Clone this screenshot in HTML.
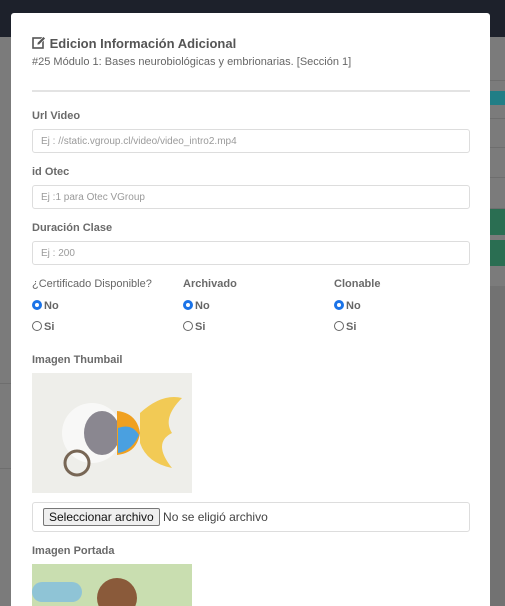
<!DOCTYPE html>
<html><head><meta charset="utf-8"><style>
*{box-sizing:border-box;margin:0;padding:0}
html,body{width:505px;height:606px;overflow:hidden}
body{background:#7b7b7b;font-family:"Liberation Sans",sans-serif;position:relative}
.top{position:absolute;left:0;top:0;width:505px;height:37px;background:#1d212b}
.abs{position:absolute}
.modal{position:absolute;left:11px;top:13px;width:479px;height:593px;background:#fff;border-radius:3px 3px 0 0;overflow:hidden}
.lbl{position:absolute;left:21px;font-size:11px;font-weight:bold;color:#6a6a6a;}
.inp{position:absolute;left:21px;width:438px;height:24px;border:1px solid #ddd;border-radius:3px;font-size:10px;color:#9a9a9a;padding:6px 8px}
.r{position:absolute;font-size:11px;font-weight:bold;color:#666}
.rd{display:inline-block;width:10px;height:10px;border:1px solid #666;border-radius:50%;vertical-align:-1px;margin-right:2px}
.rd.on{border:3px solid #1a73e8;background:#fff}
</style></head><body>
<div class="top"></div>
<div class="abs" style="left:490px;top:80px;width:15px;height:1px;background:#6e6e6e"></div>
<div class="abs" style="left:490px;top:91px;width:15px;height:14px;background:#217e86"></div>
<div class="abs" style="left:490px;top:118px;width:15px;height:1px;background:#6e6e6e"></div>
<div class="abs" style="left:490px;top:147px;width:15px;height:1px;background:#6e6e6e"></div>
<div class="abs" style="left:490px;top:177px;width:15px;height:1px;background:#6e6e6e"></div>
<div class="abs" style="left:490px;top:208px;width:15px;height:1px;background:#6e6e6e"></div>
<div class="abs" style="left:490px;top:209px;width:15px;height:26px;background:#2a6e52"></div>
<div class="abs" style="left:490px;top:240px;width:15px;height:26px;background:#2a6e52"></div>
<div class="abs" style="left:490px;top:286px;width:15px;height:320px;background:#727272"></div>
<div class="abs" style="left:0;top:383px;width:11px;height:1px;background:#6e6e6e"></div>
<div class="abs" style="left:0;top:468px;width:11px;height:1px;background:#6e6e6e"></div>
<div class="modal">
 <div class="abs" style="left:21px;top:23px;font-size:13px;font-weight:bold;color:#555">
  <svg width="14" height="13" viewBox="0 0 14 13" style="vertical-align:-1px"><rect x="1" y="2" width="10" height="10" fill="none" stroke="#555" stroke-width="1.6"/><path d="M5 9 L5.5 6.5 L11.5 0.5 L13.5 2.5 L7.5 8.5Z" fill="#555" stroke="#fff" stroke-width=".6"/></svg>
  Edicion Información Adicional</div>
 <div class="abs" style="left:21px;top:43px;font-size:11px;color:#666">#25 Módulo 1: Bases neurobiológicas y embrionarias. [Sección 1]</div>
 <div class="abs" style="left:21px;top:77px;width:438px;height:2px;background:#e3e3e3"></div>
 <div class="lbl" style="top:97px">Url Video</div>
 <div class="inp" style="top:116px">Ej : //static.vgroup.cl/video/video_intro2.mp4</div>
 <div class="lbl" style="top:153px">id Otec</div>
 <div class="inp" style="top:172px">Ej :1 para Otec VGroup</div>
 <div class="lbl" style="top:209px">Duración Clase</div>
 <div class="inp" style="top:228px">Ej : 200</div>
 <div class="lbl" style="top:265px;font-weight:normal;color:#666">¿Certificado Disponible?</div>
 <div class="lbl" style="top:265px;left:172px">Archivado</div>
 <div class="lbl" style="top:265px;left:323px">Clonable</div>
 <div class="r" style="left:21px;top:287px"><span class="rd on"></span>No</div>
 <div class="r" style="left:172px;top:287px"><span class="rd on"></span>No</div>
 <div class="r" style="left:323px;top:287px"><span class="rd on"></span>No</div>
 <div class="r" style="left:21px;top:308px"><span class="rd"></span>Si</div>
 <div class="r" style="left:172px;top:308px"><span class="rd"></span>Si</div>
 <div class="r" style="left:323px;top:308px"><span class="rd"></span>Si</div>
 <div class="lbl" style="top:341px">Imagen Thumbail</div>
 <div class="abs" style="left:21px;top:360px;width:160px;height:120px;background:#eeeeea">
  <svg width="160" height="120"><ellipse cx="60" cy="60" rx="30" ry="30" fill="#fff" opacity=".6"/>
  <ellipse cx="70" cy="60" rx="18" ry="22" fill="#8a8790"/>
  <path d="M85 38 Q105 40 108 60 Q105 80 85 82Z" fill="#f0a020"/>
  <path d="M86 55 Q100 50 107 62 Q100 78 86 80Z" fill="#4aa0e0"/>
  <path d="M108 40 Q130 20 150 25 Q130 45 140 60 Q120 70 140 95 Q115 90 108 70Z" fill="#f3c030" opacity=".8"/>
  <circle cx="45" cy="90" r="12" fill="none" stroke="#765" stroke-width="3"/></svg>
 </div>
 <div class="abs" style="left:21px;top:489px;width:438px;height:30px;border:1px solid #ddd;border-radius:3px;font-size:12px;color:#444;padding:5px 10px">
  <span style="display:inline-block;border:1px solid #777;border-radius:2px;background:#efefef;padding:1px 5px;color:#111;font-size:12px">Seleccionar archivo</span> No se eligió archivo</div>
 <div class="lbl" style="top:532px">Imagen Portada</div>
 <div class="abs" style="left:21px;top:551px;width:160px;height:50px;background:#c9deb0">
  <div class="abs" style="left:0;top:18px;width:50px;height:20px;background:#8fc4d6;border-radius:10px"></div>
  <div class="abs" style="left:65px;top:14px;width:40px;height:40px;background:#8a5a3a;border-radius:50%"></div>
 </div>
</div>
</body></html>
